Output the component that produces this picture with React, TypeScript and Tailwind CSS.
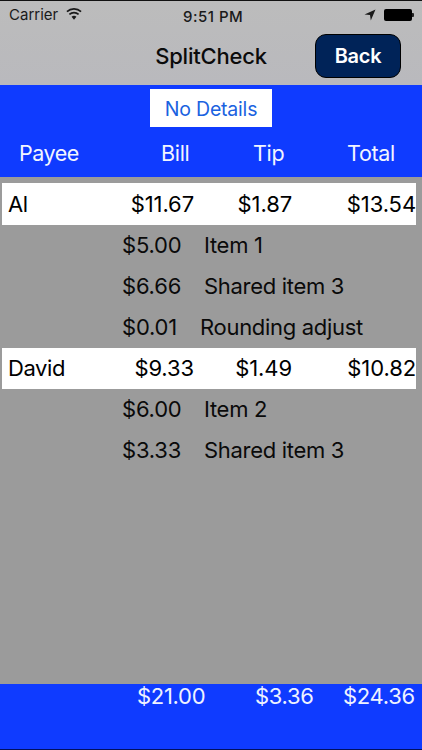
const font = "font-['Inter','Roboto',sans-serif]";

function PersonRow({ name, bill, tip, total, heightClass }: { name: string; bill: string; tip: string; total: string; heightClass: string }) {
  return (
    <div className={`flex ${heightClass} items-center bg-white text-[22px] tracking-[-0.1px] text-black ml-[2px] w-[414px] shrink-0`}>
      <span className="w-[110px] pl-[6px] tracking-[-0.4px]">{name}</span>
      <span className="w-[82px] text-right">{bill}</span>
      <span className="w-[98px] text-right">{tip}</span>
      <span className="w-[124px] text-right">{total}</span>
    </div>
  );
}

function DetailRow({ amount, label, labelClass }: { amount: string; label: string; labelClass: string }) {
  return (
    <div className="flex h-[41px] items-center text-[22px] tracking-[-0.3px] text-[#0a0a0a] shrink-0">
      <span className="ml-[122px] w-[78px] shrink-0 tracking-[-0.2px]">{amount}</span>
      <span className={labelClass}>{label}</span>
    </div>
  );
}

export default function App() {
  return (
    <div className={`flex h-[750px] w-[422px] flex-col overflow-hidden bg-[#9b9b9b] ${font}`}>
      <div className="h-px bg-[#111] shrink-0" />
      <div className="h-[84px] shrink-0 bg-[linear-gradient(#bcbcbc,#b9b9bd)]">
        <div className="relative flex h-[28px] items-center justify-between pl-[9px] pr-[8px] text-[15px] text-[#1a1a1a]">
          <div className="flex items-center gap-[8px]">
            <span>Carrier</span>
            <svg width="16" height="12" viewBox="0 0 17 12" className="mb-[3px]">
              <path d="M8.5 12 L5.9 8.9 A4 4 0 0 1 11.1 8.9 Z" fill="#1a1a1a" />
              <path d="M3.6 6.4 A7.3 7.3 0 0 1 13.4 6.4" fill="none" stroke="#1a1a1a" strokeWidth="1.8" />
              <path d="M1 3.6 A11 11 0 0 1 16 3.6" fill="none" stroke="#1a1a1a" strokeWidth="1.8" />
            </svg>
          </div>
          <span className="absolute left-[183px] top-[5px] text-[15px] font-medium tracking-[0.5px]">9:51 PM</span>
          <div className="flex items-center gap-[8px]">
            <svg width="12" height="12" viewBox="0 0 12 12">
              <path d="M11.5 0.5 L0.5 5.5 L6 6 L6.8 11.5 Z" fill="#1a1a1a" />
            </svg>
            <div className="flex items-center">
              <div className="h-[12px] w-[28px] rounded-[2px] bg-black" />
              <div className="h-[4px] w-[2px] rounded-r-[1px] bg-[#222]" />
            </div>
          </div>
        </div>
        <div className="relative flex h-[56px] items-center justify-center">
          <span className="text-[22px] font-medium tracking-[-0.2px] text-[#0b0b0b] mb-[1px]">SplitCheck</span>
          <button className="absolute left-[315px] top-[5px] h-[44px] w-[86px] rounded-[11px] border border-black bg-[#002358] text-[20px] font-semibold tracking-[-0.3px] text-white">
            Back
          </button>
        </div>
      </div>

      <div className="h-[92px] shrink-0 bg-[#0f3bff] flex flex-col items-center">
        <button className="mt-[4px] h-[38px] w-[122px] bg-white pt-[3px] text-[19.5px] tracking-[-0.2px] text-[#1a62e0]">No Details</button>
        <div className="mt-[7px] flex h-[38px] w-full items-center text-[21.5px] tracking-[-0.3px] text-[#f2f5ff]">
          <span className="w-[161px] pl-[19px] tracking-[-0.5px]">Payee</span>
          <span className="w-[92px]">Bill</span>
          <span className="w-[94px]">Tip</span>
          <span>Total</span>
        </div>
      </div>

      <div className="flex flex-1 flex-col pt-[6px]">
        <PersonRow name="Al" bill="$11.67" tip="$1.87" total="$13.54" heightClass="h-[42px]" />
        <DetailRow amount="$5.00" label="Item 1" labelClass="ml-[4px]" />
        <DetailRow amount="$6.66" label="Shared item 3" labelClass="ml-[4px]" />
        <DetailRow amount="$0.01" label="Rounding adjust" labelClass="ml-0" />
        <PersonRow name="David" bill="$9.33" tip="$1.49" total="$10.82" heightClass="h-[41px]" />
        <DetailRow amount="$6.00" label="Item 2" labelClass="ml-[4px]" />
        <DetailRow amount="$3.33" label="Shared item 3" labelClass="ml-[4px]" />
      </div>

      <div className="h-[65px] shrink-0 bg-[#0f3bff] text-[22px] tracking-[-0.3px] text-[#eef2ff]">
        <div className="flex h-[24px] items-center">
          <span className="ml-[137px] w-[118px]">$21.00</span>
          <span className="w-[88px]">$3.36</span>
          <span>$24.36</span>
        </div>
      </div>
      <div className="h-px bg-[#001060] shrink-0" />
    </div>
  );
}
